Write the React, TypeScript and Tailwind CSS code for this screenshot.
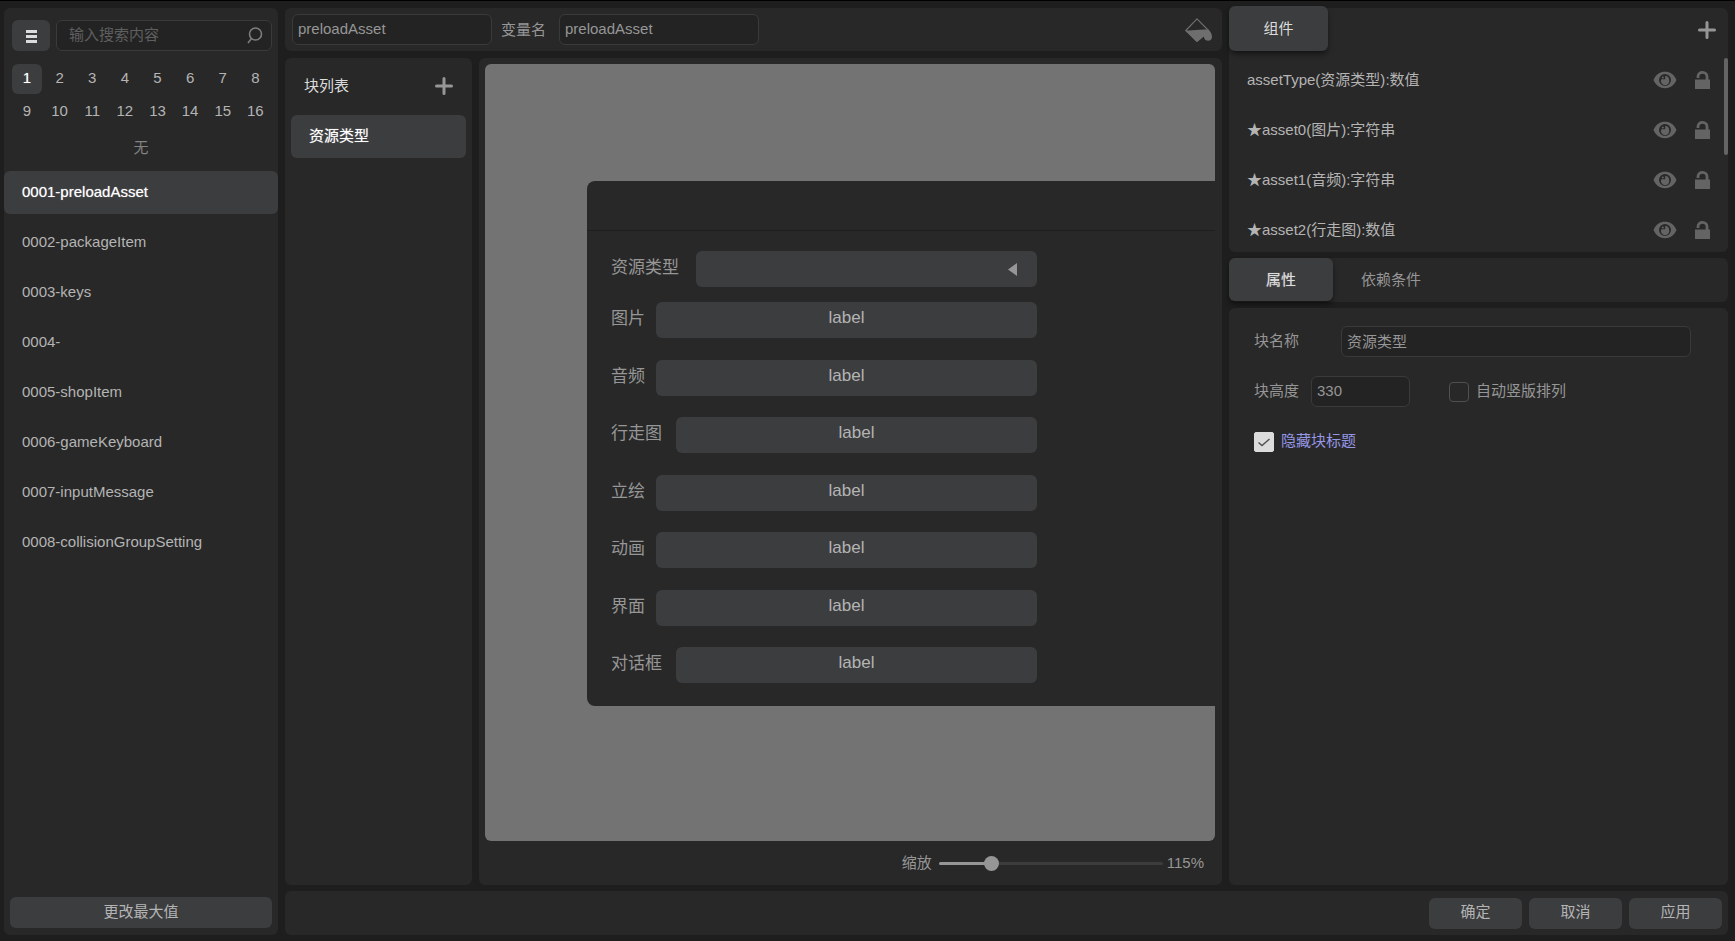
import React, { useState } from 'react';

interface ComponentItem {
  name: string;
  type: string;
}

interface FieldRow {
  label: string;
  labelClass: string;
}

const pages = Array.from({ length: 16 }, (_, i) => i + 1);

const dataItems = [
  '0001-preloadAsset',
  '0002-packageItem',
  '0003-keys',
  '0004-',
  '0005-shopItem',
  '0006-gameKeyboard',
  '0007-inputMessage',
  '0008-collisionGroupSetting',
];

const components: ComponentItem[] = [
  { name: 'assetType(资源类型)', type: '数值' },
  { name: '★asset0(图片)', type: '字符串' },
  { name: '★asset1(音频)', type: '字符串' },
  { name: '★asset2(行走图)', type: '数值' },
];

const assetRows: FieldRow[] = [
  { label: '图片', labelClass: 'w-[45px]' },
  { label: '音频', labelClass: 'w-[45px]' },
  { label: '行走图', labelClass: 'w-[65px]' },
  { label: '立绘', labelClass: 'w-[45px]' },
  { label: '动画', labelClass: 'w-[45px]' },
  { label: '界面', labelClass: 'w-[45px]' },
  { label: '对话框', labelClass: 'w-[65px]' },
];

const panel = 'bg-[#282828] rounded-md';
const field = 'h-[31px] rounded-md border border-[#3a3a3a] bg-[#232323] px-[5px] pb-[2px] text-[#969696] outline-none';
const strong = 'text-white [text-shadow:0_0_1px_#ffffff99]';

const PlusIcon: React.FC = () => (
  <svg className="w-[18px] h-[18px]" viewBox="0 0 18 18" fill="none" stroke="#969696" strokeWidth={3} strokeLinecap="round">
    <path d="M9 1.5v15M1.5 9h15" />
  </svg>
);

const EyeIcon: React.FC = () => (
  <svg className="w-6 h-[18px]" viewBox="0 0 24 18">
    <path fill="#646464" fillRule="evenodd" d="M.5 9C3 3.300 7 .8 12 .8S21 3.300 23.500 9c-2.500 5.700-6.500 8.200-11.500 8.200S3 14.700.5 9zM12 3a6 6 0 1 0 0 12A6 6 0 0 0 12 3z" />
    <path fill="#646464" d="M12.200 4.800v3.400H8.300A4.200 4.200 0 1 0 16.200 9c0-2.200-1.700-4-4-4.200z" />
    <circle cx="9.800" cy="6.600" r="1" fill="#646464" />
  </svg>
);

const UnlockIcon: React.FC = () => (
  <svg className="w-[15px] h-[18px]" viewBox="0 0 15 18">
    <path d="M3 7V5.500C3 3 5 1.400 7.500 1.400S12 3.200 12 5.500V10" fill="none" stroke="#646464" strokeWidth={2.800} />
    <rect x="0" y="8.500" width="15" height="9.500" fill="#646464" />
  </svg>
);

const BucketIcon: React.FC = () => (
  <svg className="w-[27px] h-6" viewBox="0 0 27 24">
    <path d="M12 .8L.8 12.500 12 23.200 23.500 12.500z" fill="none" stroke="#6e6e6e" strokeWidth={1.200} strokeLinejoin="round" />
    <path d="M.6 12.400C8 13 14 11 23.600 11.800c2 1.800 3.400 4.200 3.400 7 0 2.500-1.600 4-3.800 4-2.400 0-4-1.300-4.400-4.300l-5.400 4.600c-.9.700-1.900.7-2.800 0z" fill="#6e6e6e" />
  </svg>
);

const Sidebar: React.FC = () => {
  const [page, setPage] = useState(1);
  const [selected, setSelected] = useState(0);

  return (
    <aside className={`${panel} w-[274px] shrink-0 flex flex-col`}>
      <div className="flex gap-[6px] pl-2 pr-[6px] pt-3">
        <button aria-label="菜单" className="w-[38px] h-[31px] shrink-0 rounded-md bg-[#3c3d3f] flex items-center justify-center">
          <svg className="w-[11px] h-[13px] mt-[2px]" viewBox="0 0 11 13" fill="#dcdcdc">
            <path d="M0 0h11v3H0zM0 5h11v3H0zM0 10h11v3H0z" />
          </svg>
        </button>
        <div className="relative flex-1">
          <input
            type="search"
            aria-label="搜索"
            placeholder="输入搜索内容"
            className="w-full h-[31px] rounded-md border border-[#3a3a3a] bg-[#232323] pl-3 pr-8 pb-[2px] outline-none placeholder:text-[#5f5f5f]"
          />
          <svg className="absolute right-[9px] top-[7px] w-4 h-[17px]" viewBox="0 0 16 17" fill="none" stroke="#7d7d7d" strokeWidth={1.600}>
            <circle cx="8.500" cy="7" r="6" />
            <path d="M4.500 11.500L1 16" />
          </svg>
        </div>
      </div>

      <div className="grid grid-cols-8 gap-x-[3px] gap-y-[3px] px-2 pt-[13px]">
        {pages.map((n) => (
          <button
            key={n}
            onClick={() => setPage(n)}
            className={`h-[30px] w-[30px] rounded-md pb-[2px] ${n === page ? `bg-[#3c3d3f] ${strong}` : 'text-[#b4b4b4]'}`}
          >
            {n}
          </button>
        ))}
      </div>

      <p className="mt-[11px] text-center text-[#828282]">无</p>

      <ul className="mt-[13px] flex flex-1 flex-col gap-[7px]">
        {dataItems.map((item, i) => (
          <li key={item}>
            <button
              onClick={() => setSelected(i)}
              className={`block w-full h-[43px] rounded-md px-[18px] pb-[2px] text-left ${i === selected ? `bg-[#3c3d3f] ${strong}` : 'text-[#b4b4b4]'}`}
            >
              {item}
            </button>
          </li>
        ))}
      </ul>

      <div className="px-[6px] pb-[7px]">
        <button className="block w-full h-[31px] rounded-md bg-[#3c3d3f] pb-[2px] text-[#b4b4b4]">更改最大值</button>
      </div>
    </aside>
  );
};

const BlockWindow: React.FC = () => (
  <div className="absolute left-[102px] top-[117px] right-0 rounded-l-lg bg-[#282828] pb-[23px] text-[17px] text-[#969696]">
    <div className="h-[50px] border-b border-[#1e1e1e]"></div>
    <div className="w-[450px] pl-6 pt-5">
      <div className="flex items-center">
        <label htmlFor="asset-type" className="w-[85px] pb-[2px]">资源类型</label>
        <div className="relative flex-1">
          <select id="asset-type" className="block w-full h-9 appearance-none rounded-md bg-[#3c3d3f] px-3 outline-none">
            <option></option>
          </select>
          <svg className="pointer-events-none absolute right-5 top-3 w-[9px] h-[13px]" viewBox="0 0 9 13" fill="#969696">
            <path d="M9 0v13L0 6.500z" />
          </svg>
        </div>
      </div>
      <div className="mt-[15px] h-[381px] flex flex-col justify-between">
        {assetRows.map((row) => (
          <div key={row.label} className="flex items-center">
            <span className={`${row.labelClass} pb-[2px]`}>{row.label}</span>
            <button className="flex-1 h-9 rounded-md bg-[#3c3d3f] pb-1 text-[#b4b4b4]">label</button>
          </div>
        ))}
      </div>
    </div>
  </div>
);

const Editor: React.FC = () => {
  const [zoom, setZoom] = useState(115);

  return (
    <main className="flex-1 min-w-0 flex flex-col gap-[7px]">
      <header className={`${panel} h-[43px] flex items-center pl-[7px] pr-[10px]`}>
        <input aria-label="名称" defaultValue="preloadAsset" className={`${field} w-[200px]`} />
        <label htmlFor="var-name" className="ml-[9px] text-[#969696]">变量名</label>
        <input id="var-name" defaultValue="preloadAsset" className={`${field} ml-[13px] w-[200px]`} />
        <button aria-label="填充" className="ml-auto">
          <BucketIcon />
        </button>
      </header>

      <div className="flex-1 min-h-0 flex gap-[7px]">
        <section className={`${panel} w-[187px] shrink-0 px-[6px]`}>
          <div className="flex h-[57px] items-center justify-between pl-[13px] pr-[13px] pb-[2px]">
            <h2 className="text-[#dcdcdc]">块列表</h2>
            <button aria-label="添加块">
              <PlusIcon />
            </button>
          </div>
          <button className={`block w-full h-[43px] rounded-md bg-[#3c3d3f] px-[18px] pb-[2px] text-left ${strong}`}>资源类型</button>
        </section>

        <section className={`${panel} flex-1 min-w-0 flex flex-col pl-[6px] pr-[7px] pt-[6px]`}>
          <div className="relative flex-1 overflow-hidden rounded-md bg-[#737373]">
            <BlockWindow />
          </div>
          <div className="flex h-11 items-center justify-end pr-[11px] text-[#969696]">
            <label htmlFor="zoom">缩放</label>
            <input
              id="zoom"
              type="range"
              min={50}
              max={350}
              value={zoom}
              onChange={(e) => setZoom(Number(e.target.value))}
              className="ml-[7px] mr-1 w-[224px] h-[3px] appearance-none rounded-full bg-linear-to-r from-[#969696] from-24% to-[#3c3c3c] to-24% [&::-webkit-slider-thumb]:appearance-none [&::-webkit-slider-thumb]:w-[15px] [&::-webkit-slider-thumb]:h-[15px] [&::-webkit-slider-thumb]:rounded-full [&::-webkit-slider-thumb]:bg-[#969696]"
            />
            <output htmlFor="zoom">{zoom}%</output>
          </div>
        </section>
      </div>
    </main>
  );
};

const Inspector: React.FC = () => {
  const [tab, setTab] = useState('属性');
  const [autoLayout, setAutoLayout] = useState(false);
  const [hideTitle, setHideTitle] = useState(true);

  return (
    <aside className="w-[499px] shrink-0 flex flex-col gap-[6px]">
      <section className={`${panel} relative h-[244px]`}>
        <div className="flex h-[43px] items-end justify-between pr-3">
          <button className="w-[99px] h-[45px] shrink-0 rounded-md bg-[#3c3d3f] text-[#dcdcdc] shadow-md shadow-black/40">组件</button>
          <button aria-label="添加组件" className="self-center">
            <PlusIcon />
          </button>
        </div>
        <ul className="pt-1">
          {components.map((c) => (
            <li key={c.name} className="flex h-[50px] items-center pl-[18px] pr-[18px] text-[#b4b4b4]">
              <span className="flex-1">{c.name}:{c.type}</span>
              <button aria-label="显示">
                <EyeIcon />
              </button>
              <button aria-label="锁定" className="ml-[18px]">
                <UnlockIcon />
              </button>
            </li>
          ))}
        </ul>
        {/* Scroll thumb */}
        <div className="absolute right-0 top-[50px] w-1 h-[97px] rounded-full bg-[#646464]"></div>
      </section>

      <nav className={`${panel} h-11 flex`}>
        {['属性', '依赖条件'].map((name) => (
          <button
            key={name}
            onClick={() => setTab(name)}
            className={`h-[43px] rounded-md ${name === tab ? 'w-[104px] bg-[#3c3d3f] text-[#dcdcdc] [text-shadow:0_0_1px_#dcdcdc99] shadow-md shadow-black/40' : 'px-7 text-[#969696]'}`}
          >
            {name}
          </button>
        ))}
      </nav>

      <section className={`${panel} flex-1 pl-[25px] pt-[18px] pr-[37px] text-[#969696]`}>
        <div className="flex items-center">
          <label htmlFor="block-name" className="w-[87px] pb-[2px]">块名称</label>
          <input id="block-name" defaultValue="资源类型" className={`${field} flex-1 min-w-0`} />
        </div>
        <div className="mt-[19px] flex items-center">
          <label htmlFor="block-height" className="pb-[2px]">块高度</label>
          <input id="block-height" defaultValue="330" className={`${field} ml-3 w-[99px]`} />
          <label className="ml-[39px] flex items-center gap-[7px]">
            <input
              type="checkbox"
              checked={autoLayout}
              onChange={(e) => setAutoLayout(e.target.checked)}
              className="w-5 h-5 appearance-none rounded-sm border border-[#505050] checked:bg-[#dcdcdc]"
            />
            <span className="pb-[2px]">自动竖版排列</span>
          </label>
        </div>
        <label className="mt-6 inline-flex items-center gap-[7px] text-[#9696e6]">
          <span className="relative flex">
            <input
              type="checkbox"
              checked={hideTitle}
              onChange={(e) => setHideTitle(e.target.checked)}
              className="w-5 h-5 appearance-none rounded-xs border border-[#505050] checked:border-[#dcdcdc] checked:bg-[#dcdcdc]"
            />
            {hideTitle && (
              <svg className="pointer-events-none absolute inset-0 w-5 h-5" viewBox="0 0 20 20" fill="none" stroke="#505050" strokeWidth={1.400}>
                <path d="M4.500 10.500l3.500 3L15.500 7" />
              </svg>
            )}
          </span>
          <span className="pb-[2px]">隐藏块标题</span>
        </label>
      </section>
    </aside>
  );
};

export default function App() {
  return (
    <div className="flex h-screen gap-[7px] border-t border-black bg-[#1e1e1e] pl-1 pr-[7px] pt-[7px] pb-[6px] font-['Liberation_Sans','Noto_Sans_CJK_SC',sans-serif] text-[15px] leading-5">
      <Sidebar />
      <div className="flex-1 min-w-0 flex flex-col gap-[6px]">
        <div className="flex-1 min-h-0 flex gap-[7px]">
          <Editor />
          <Inspector />
        </div>
        <footer className={`${panel} h-[44px] flex items-center justify-end gap-[7px] pr-[6px]`}>
          {['确定', '取消', '应用'].map((name) => (
            <button key={name} className="w-[93px] h-[31px] rounded-md bg-[#3c3d3f] pb-[2px] text-[#b4b4b4]">
              {name}
            </button>
          ))}
        </footer>
      </div>
    </div>
  );
}
